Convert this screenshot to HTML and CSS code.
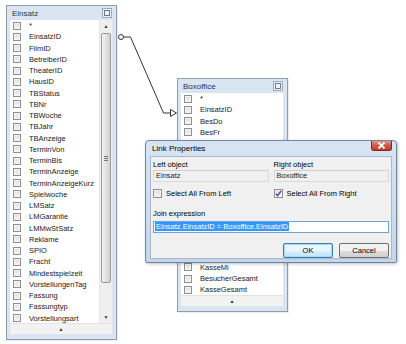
FILE: index.html
```html
<!DOCTYPE html>
<html lang="de">
<head>
  <meta charset="UTF-8" />
  <title>Link Properties</title>
  <link rel="stylesheet" href="styles.css">
</head>
<body>
  <div class="canvas">
    <svg class="links" width="406" height="344" viewBox="0 0 406 344">
      <polyline points="123.5,37 130.5,37 163.5,113 170,113" fill="none" stroke="#333" stroke-width="1" />
      <circle cx="121" cy="37" r="2.5" fill="#fff" stroke="#333" stroke-width="1" />
      <polygon points="170.5,109.5 176.5,113 170.5,116.5" fill="#fff" stroke="#333" stroke-width="1" />
    </svg>

    <div class="table einsatz">
      <div class="table-head">
        <span class="table-title">Einsatz</span>
        <span class="tclose"><span></span></span>
      </div>
      <div class="table-body">
        <ul class="fields">
          <li><i></i>*</li>
          <li><i></i>EinsatzID</li>
          <li><i></i>FilmID</li>
          <li><i></i>BetreiberID</li>
          <li><i></i>TheaterID</li>
          <li><i></i>HausID</li>
          <li><i></i>TBStatus</li>
          <li><i></i>TBNr</li>
          <li><i></i>TBWoche</li>
          <li><i></i>TBJahr</li>
          <li><i></i>TBAnzeige</li>
          <li><i></i>TerminVon</li>
          <li><i></i>TerminBis</li>
          <li><i></i>TerminAnzeige</li>
          <li><i></i>TerminAnzeigeKurz</li>
          <li><i></i>Spielwoche</li>
          <li><i></i>LMSatz</li>
          <li><i></i>LMGarantie</li>
          <li><i></i>LMMwStSatz</li>
          <li><i></i>Reklame</li>
          <li><i></i>SPIO</li>
          <li><i></i>Fracht</li>
          <li><i></i>Mindestspielzeit</li>
          <li><i></i>VorstellungenTag</li>
          <li><i></i>Fassung</li>
          <li><i></i>Fassungtyp</li>
          <li><i></i>Vorstellungsart</li>
          <li><i></i></li>
        </ul>
        <div class="vscroll">
          <div class="sb-btn">&#9650;</div>
          <div class="sb-track"><div class="sb-thumb"><span class="grip"></span></div></div>
          <div class="sb-btn">&#9660;</div>
        </div>
      </div>
      <div class="table-foot">&#9650;</div>
    </div>

    <div class="table boxoffice">
      <div class="table-head">
        <span class="table-title">Boxoffice</span>
        <span class="tclose"><span></span></span>
      </div>
      <div class="table-body">
        <ul class="fields">
          <li><i></i>*</li>
          <li><i></i>EinsatzID</li>
          <li><i></i>BesDo</li>
          <li><i></i>BesFr</li>
          <!-- rows hidden behind the dialog -->
          <li><i></i></li>
          <li><i></i></li>
          <li><i></i></li>
          <li><i></i></li>
          <li><i></i></li>
          <li><i></i></li>
          <li><i></i></li>
          <li><i></i></li>
          <li><i></i></li>
          <li><i></i></li>
          <li><i></i></li>
          <li><i></i>KasseMi</li>
          <li><i></i>BesucherGesamt</li>
          <li><i></i>KasseGesamt</li>
        </ul>
      </div>
      <div class="table-foot">&#9650;</div>
    </div>

    <div class="dialog">
      <div class="dialog-title">
        <span>Link Properties</span>
        <span class="dclose">
          <svg width="9" height="7" viewBox="0 0 9 7"><path d="M1.5 0.5 L7.5 6.5 M7.5 0.5 L1.5 6.5" stroke="#fff" stroke-width="1.8" /></svg>
        </span>
      </div>
      <div class="dialog-client">
        <div class="cols">
          <div class="col">
            <div class="lbl">Left object</div>
            <div class="field">Einsatz</div>
            <label class="check"><span class="cb"></span>Select All From Left</label>
          </div>
          <div class="col">
            <div class="lbl">Right object</div>
            <div class="field">Boxoffice</div>
            <label class="check"><span class="cb checked">
              <svg width="7" height="7" viewBox="0 0 7 7"><path d="M0.8 3.6 L2.6 5.6 L6.2 0.8" fill="none" stroke="#2a4fa8" stroke-width="1.4" /></svg>
            </span>Select All From Right</label>
          </div>
        </div>
        <div class="lbl join-lbl">Join expression</div>
        <div class="join-input"><span class="sel">Einsatz.EinsatzID = Boxoffice.EinsatzID</span></div>
        <div class="buttons">
          <button class="btn default">OK</button>
          <button class="btn">Cancel</button>
        </div>
      </div>
    </div>
  </div>
</body>
</html>
```

FILE: styles.css
```css
body {
  margin: 0;
  background: #fff;
  font-family: "Liberation Sans", Arial, sans-serif;
  font-size: 7.5px;
  color: #222;
}

.canvas {
  position: relative;
  width: 406px;
  height: 344px;
  overflow: hidden;
}

.links {
  position: absolute;
  left: 0;
  top: 0;
}

/* table windows on the diagram */
.table {
  position: absolute;
  box-sizing: border-box;
  display: flex;
  flex-direction: column;
  background: #dae5f2;
  border: 1px solid #8f9caa;
  padding: 0 4px 5px 3px;
  box-shadow: 1px 1px 0 rgba(0,0,0,0.08);
}

.einsatz {
  left: 6px;
  top: 5px;
  width: 111px;
  height: 335px;
}

.boxoffice {
  left: 177px;
  top: 78px;
  width: 111px;
  height: 234px;
}

.table-head {
  height: 14px;
  flex: none;
  display: flex;
  align-items: center;
  justify-content: space-between;
}

.table-title {
  font-size: 8px;
  color: #1f3656;
  padding-left: 2px;
  padding-top: 1px;
}

.tclose {
  width: 8px;
  height: 8px;
  border: 1px solid #9aa8b8;
  background: #eef3f9;
  display: flex;
  align-items: center;
  justify-content: center;
}

.tclose span {
  width: 4px;
  height: 4px;
  border: 1px solid #6d7a8a;
}

.table-body {
  flex: 1;
  display: flex;
  background: #fff;
  overflow: hidden;
  min-height: 0;
}

.fields {
  list-style: none;
  margin: 0;
  padding: 0;
  flex: 1;
}

.fields li {
  height: 11.25px;
  display: flex;
  align-items: center;
  white-space: nowrap;
}

.fields li i {
  box-sizing: border-box;
  width: 8px;
  height: 8px;
  margin: 0 8px 0 3px;
  border: 1px solid #8e8f8f;
  background: linear-gradient(#dcdcdc, #f6f6f6);
  box-shadow: inset 0 0 0 1px #f4f4f4;
  flex: none;
}

.vscroll {
  width: 12px;
  flex: none;
  display: flex;
  flex-direction: column;
  background: #efefef;
  border-left: 1px solid #e6e6e6;
}

.sb-btn {
  height: 12px;
  font-size: 5px;
  line-height: 12px;
  text-align: center;
  color: #333;
}

.sb-track {
  flex: 1;
  padding: 1px 1px;
}

.sb-thumb {
  box-sizing: border-box;
  height: 250px;
  border: 1px solid #9b9b9b;
  border-radius: 2px;
  background: linear-gradient(90deg, #f3f3f3, #dedede 60%, #d2d2d2);
  display: flex;
  align-items: center;
  justify-content: center;
}

.grip {
  width: 4px;
  height: 5px;
  background: repeating-linear-gradient(#777 0 1px, transparent 1px 2px);
}

.table-foot {
  height: 11px;
  flex: none;
  background: #f2f2f2;
  border-top: 1px solid #e3e3e3;
  box-sizing: border-box;
  font-size: 5px;
  line-height: 10px;
  text-align: center;
  color: #333;
}

/* link properties dialog */
.dialog {
  position: absolute;
  left: 145px;
  top: 140px;
  width: 252px;
  height: 123px;
  box-sizing: border-box;
  display: flex;
  flex-direction: column;
  background: linear-gradient(#d7e4f3, #c6d6ea);
  border: 1px solid #6f86a3;
  border-radius: 4px 4px 2px 2px;
  padding: 0 4px 3px 4px;
  box-shadow: 1px 1px 3px rgba(0,0,0,0.25);
}

.dialog-title {
  height: 15px;
  flex: none;
  display: flex;
  align-items: flex-start;
  justify-content: space-between;
  font-size: 8px;
  color: #000;
}

.dialog-title > span:first-child {
  padding: 3px 0 0 2px;
}

.dclose {
  width: 21px;
  height: 10px;
  box-sizing: border-box;
  border: 1px solid #7a2b21;
  border-top: none;
  border-radius: 0 0 3px 3px;
  background: linear-gradient(#e4998e, #cf5a48 50%, #c13b28);
  display: flex;
  align-items: center;
  justify-content: center;
}

.dialog-client {
  flex: 1;
  background: #f0f0f0;
  border: 1px solid #a9b8cb;
  padding: 3px 2px 0 2px;
}

.cols {
  display: flex;
  gap: 5px;
}

.col {
  flex: 1;
}

.lbl {
  height: 9px;
  line-height: 9px;
  color: #000;
}

.field {
  box-sizing: border-box;
  height: 12px;
  margin-top: 1px;
  padding-left: 2px;
  line-height: 10px;
  border: 1px solid #dadada;
  border-top-color: #cfcfcf;
  background: #f0f0f0;
  color: #222;
}

.check {
  display: flex;
  align-items: center;
  height: 12px;
  margin-top: 5px;
  color: #000;
}

.cb {
  box-sizing: border-box;
  width: 9px;
  height: 9px;
  margin-right: 4px;
  border: 1px solid #8e8f8f;
  background: linear-gradient(#dcdcdc, #f7f7f7);
  box-shadow: inset 0 0 0 1px #f4f4f4;
  display: flex;
  align-items: center;
  justify-content: center;
}

.join-lbl {
  margin-top: 10px;
}

.join-input {
  box-sizing: border-box;
  height: 12px;
  margin-top: 3px;
  border: 1px solid #6fa3d9;
  background: #fff;
  padding-left: 1px;
  line-height: 10px;
  white-space: nowrap;
}

.sel {
  background: #3399ff;
  color: #fff;
  padding: 0 1px;
}

.buttons {
  display: flex;
  justify-content: flex-end;
  gap: 6px;
  margin-top: 10px;
}

.btn {
  box-sizing: border-box;
  width: 50px;
  height: 15px;
  padding: 0;
  font-family: "Liberation Sans", Arial, sans-serif;
  font-size: 7.5px;
  color: #000;
  border: 1px solid #707070;
  border-radius: 2px;
  background: linear-gradient(#f2f2f2 50%, #dddddd 50%, #cfcfcf);
}

.btn.default {
  border-color: #3c7fb1;
  background: linear-gradient(#eaf6fd 50%, #d9f0fc 50%, #bee6fd);
  box-shadow: inset 0 0 0 1px #a6d8f6;
}
```
